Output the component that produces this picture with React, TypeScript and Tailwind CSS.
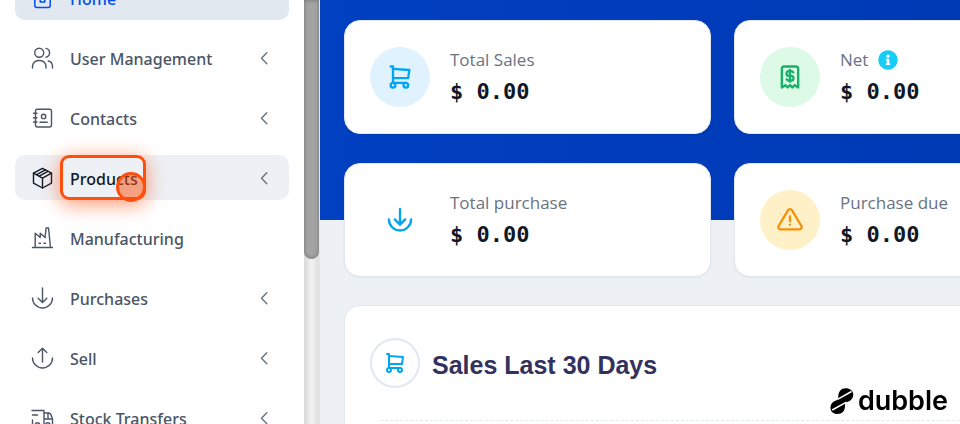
import type { ReactNode } from "react";
import { FaInfoCircle } from "react-icons/fa";

type NavItem = {
  label: string;
  icon: ReactNode;
  expandable?: boolean;
  state?: "active" | "hover";
};

function Glyph({ children, className = "size-6", stroke = 2 }: { children: ReactNode; className?: string; stroke?: number }) {
  return (
    <svg
      viewBox="0 0 24 24"
      fill="none"
      stroke="currentColor"
      strokeWidth={stroke}
      strokeLinecap="round"
      strokeLinejoin="round"
      className={`shrink-0 ${className}`}
      aria-hidden="true"
    >
      {children}
    </svg>
  );
}

const cartPaths = (
  <>
    <circle cx="6" cy="19" r="2" />
    <circle cx="17" cy="19" r="2" />
    <path d="M17 17H6V3H4" />
    <path d="M6 5l14 1l-1 7H6" />
  </>
);

const navItems: NavItem[] = [
  {
    label: "Home",
    state: "active",
    icon: (
      <Glyph stroke={1.5}>
        <path d="M4.8 10v9.5a2 2 0 0 0 2 2h11.400a2 2 0 0 0 2-2V10L12.500 3z" />
        <path d="M10.200 11.500h4.600v4.500h-4.600z" />
      </Glyph>
    ),
  },
  {
    label: "User Management",
    expandable: true,
    icon: (
      <Glyph stroke={1.4}>
        <circle cx="9.200" cy="6.800" r="4.500" />
        <path d="M16 2.400a4.500 4.500 0 0 1 0 8.800" />
        <path d="M2.500 22v-1.500a6 6 0 0 1 6-6h1.500a6 6 0 0 1 6 6V22" />
        <path d="M18.200 15c2.700 .6 4.300 2.600 4.300 5.500V22" />
      </Glyph>
    ),
  },
  {
    label: "Contacts",
    expandable: true,
    icon: (
      <Glyph stroke={1.4}>
        <rect x="5.500" y="3.200" width="16" height="17.800" rx="2" />
        <circle cx="13.600" cy="10.400" r="2.200" />
        <path d="M10 16.300h7.200M3.500 7.300h3.500M3.500 11.700h3.500M3.500 16h3.500" />
      </Glyph>
    ),
  },
  {
    label: "Products",
    expandable: true,
    state: "hover",
    icon: (
      <Glyph stroke={1.4}>
        <path d="M12.500 2.300l9 4.800v10l-9 4.900l-9-4.900v-10z" />
        <path d="M3.500 7.100l9 5l9-5M12.500 12.100V22M6.800 8.700l8.600-4.800M9.300 10.200l8.600-4.900" />
      </Glyph>
    ),
  },
  {
    label: "Manufacturing",
    icon: (
      <Glyph stroke={1.4}>
        <path d="M2.500 21.500h20M5.200 21.500V7.200l5 4.300V7.200l5 4.300M14.600 11l.4.500l1.100-9.500h2.400l2 19.500M9 17.200h1.500M14 17.200h1.500" />
      </Glyph>
    ),
  },
  {
    label: "Purchases",
    expandable: true,
    icon: (
      <Glyph stroke={1.4}>
        <path d="M2.500 12a10 10 0 0 0 20 0M12.500 2v14.200M8.200 12.200l4.300 4.300l4.300-4.300" />
      </Glyph>
    ),
  },
  {
    label: "Sell",
    expandable: true,
    icon: (
      <Glyph stroke={1.4}>
        <path d="M2.500 12a10 10 0 0 0 20 0M12.500 16V2.200M8.200 6.500l4.300-4.300l4.300 4.300" />
      </Glyph>
    ),
  },
  {
    label: "Stock Transfers",
    expandable: true,
    icon: (
      <Glyph stroke={1.4}>
        <path d="M2 4.500h12v14.500M14 7h4.500q2 0 2.800 2.500l1.200 3.500v6h-2M14 13h8.500M18 7v6M2.500 9h5M2.500 14v5h2.500M10 19h5" />
        <circle cx="7.500" cy="19" r="2.300" />
        <circle cx="17.800" cy="19" r="2.300" />
      </Glyph>
    ),
  },
];

const itemStyle = {
  active: "bg-[#e2e8f0] text-[#004eeb]",
  hover: "bg-[#edf1f6] text-gray-900",
  idle: "text-gray-600",
};

function SidebarItem({ item }: { item: NavItem }) {
  return (
    <li className="relative">
      <a
        href="#"
        className={`flex h-[45px] items-center gap-4 rounded-[10px] pr-[21px] pl-[15px] ${itemStyle[item.state ?? "idle"]}`}
      >
        {item.icon}
        <span className="flex-1 pt-0.5 text-[16px] leading-6 font-medium whitespace-nowrap">{item.label}</span>
        {item.expandable && (
          <svg viewBox="0 0 8 14" className="h-3.5 w-2 text-gray-500" fill="none" stroke="currentColor" strokeWidth="1.4" strokeLinecap="round" strokeLinejoin="round" aria-hidden="true">
            <path d="M6.800 1.800L1.500 7.300l5.300 5.500" />
          </svg>
        )}
      </a>
      {item.state === "hover" && (
        <div className="pointer-events-none absolute inset-y-0 left-[45px] w-[86px] rounded-[9px] border-3 border-[#ff4f0d] shadow-[0_4px_20px_rgba(255,79,13,0.6)]">
          <div className="absolute -right-[3px] -bottom-[5px] size-[30px] rounded-full border-3 border-[#ff4f0d] bg-[#ff4f0d]/50" />
        </div>
      )}
    </li>
  );
}

type Stat = { label: string; value: string; tone: string; info?: boolean; icon: ReactNode };

const stats: Stat[] = [
  { label: "Total Sales", value: "$ 0.00", tone: "bg-sky-100 text-sky-500", icon: cartPaths },
  {
    label: "Net",
    value: "$ 0.00",
    tone: "bg-[#dcfae6] text-[#17b26a]",
    info: true,
    icon: (
      <>
        <path d="M5 21V5a2 2 0 0 1 2-2h10a2 2 0 0 1 2 2v16l-3-2l-2 2l-2-2l-2 2l-2-2l-3 2" />
        <path d="M14.800 8a2 2 0 0 0-1.800-1h-2a2 2 0 1 0 0 4h2a2 2 0 1 1 0 4h-2a2 2 0 0 1-1.800-1M12 6v10" />
      </>
    ),
  },
  {
    label: "Total purchase",
    value: "$ 0.00",
    tone: "text-sky-500",
    icon: <path d="M2.500 11.500a9.500 9.500 0 0 0 19 0M12 2.500v13.500M7.500 11.500l4.500 4.500l4.500-4.500" />,
  },
  {
    label: "Purchase due",
    value: "$ 0.00",
    tone: "bg-[#fef0c7] text-[#f79009]",
    icon: (
      <>
        <path d="M12 9v4M12 16h.01" />
        <path d="M10.363 3.591L2.257 17.125a1.914 1.914 0 0 0 1.636 2.871h16.214a1.914 1.914 0 0 0 1.636-2.870L13.637 3.591a1.914 1.914 0 0 0-3.274 0z" />
      </>
    ),
  },
];

function StatCard({ stat }: { stat: Stat }) {
  return (
    <section className="flex items-center gap-5 rounded-2xl border border-slate-200 bg-white px-[25px] py-[25px] shadow-xs">
      <div className={`flex size-[60px] shrink-0 items-center justify-center rounded-full ${stat.tone}`}>
        <Glyph className="size-7">{stat.icon}</Glyph>
      </div>
      <div>
        <p className="flex items-center gap-2.5 text-[17px] leading-7 text-gray-500">
          {stat.label}
          {stat.info && <FaInfoCircle className="size-5 text-[#17cdf5]" aria-label="More information" />}
        </p>
        <p className="pt-0.5 font-['DejaVu_Sans_Mono',monospace] text-[22px] leading-8 font-bold text-gray-900">{stat.value}</p>
      </div>
    </section>
  );
}

export default function App() {
  return (
    <div className="flex h-screen overflow-hidden bg-white font-['Open_Sans','Noto_Sans',sans-serif]">
      <aside className="flex w-80 shrink-0 border-r border-slate-200">
        <nav className="min-w-0 flex-1 overflow-hidden px-[15px] font-['Noto_Sans',sans-serif]" aria-label="Main">
          <ul className="-mt-[25px] flex flex-col gap-[15px]">
            {navItems.map((item) => (
              <SidebarItem key={item.label} item={item} />
            ))}
          </ul>
        </nav>
        <div className="w-[15px] bg-linear-to-r from-[#d8d8d8] via-[#f3f3f3] to-[#dedede]" aria-hidden="true">
          <div className="h-[259px] rounded-b-full bg-[#a3a3a3] shadow-[inset_0_0_4px_rgba(0,0,0,0.3)]" />
        </div>
      </aside>

      <main className="min-w-0 flex-1 overflow-hidden bg-[#edf1f6] bg-[linear-gradient(to_right,#0040c1,#003ab5)] bg-[length:100%_220px] bg-no-repeat pt-5 pl-6">
        <div className="flex min-w-[757px] flex-col gap-7">
          <div className="grid grid-cols-2 gap-x-[23px] gap-y-[29px]">
            {stats.map((stat) => (
              <StatCard key={stat.label} stat={stat} />
            ))}
          </div>
          <section className="rounded-2xl border border-slate-200 bg-white px-[25px] py-8">
            <header className="flex items-center gap-3">
              <div className="flex size-[50px] items-center justify-center rounded-full border-2 border-slate-200 text-sky-500">
                <Glyph>{cartPaths}</Glyph>
              </div>
              <h2 className="pt-1 font-['Liberation_Sans',Arial,sans-serif] text-[25px] leading-8 font-bold text-[#32325d]">
                Sales Last 30 Days
              </h2>
            </header>
            <div className="mt-8 ml-2.5 h-60 border-t border-dashed border-slate-200" />
          </section>
        </div>
      </main>

      <div className="fixed right-3 bottom-[7px] flex items-center gap-1 text-black">
        <svg viewBox="0 0 24 28" className="h-7 w-6" aria-hidden="true">
          <path
            d="M15.500 1.200c4.500 0 7.800 2.500 7.800 6.300c0 3.800-2.800 6.500-6 7.500c-2 .6-2.300 1.600-2.300 4c0 5-3 8-7.500 8c-4.300 0-7-2.500-7-6.300c0-3.700 2.500-6.200 5.500-7.200c2-.7 2.300-1.600 2.300-4c0-5 3-8.300 7.200-8.300z"
            fill="currentColor"
          />
          <path d="M7.500 12.300L21.500 4.500M2.200 23L16.500 15.200" fill="none" stroke="white" strokeWidth="1.500" />
        </svg>
        <span className="font-[Inter,sans-serif] text-[27px] leading-8 font-semibold">dubble</span>
      </div>
    </div>
  );
}
